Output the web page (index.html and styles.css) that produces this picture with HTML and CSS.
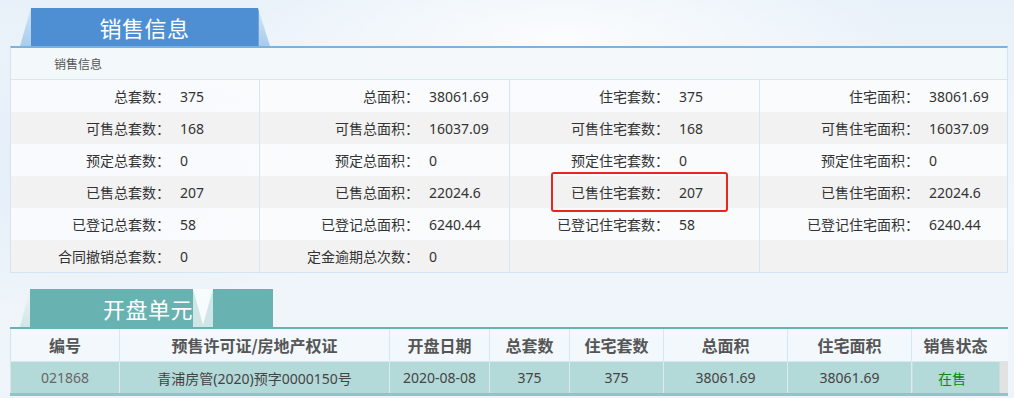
FILE: index.html
```html
<!DOCTYPE html>
<html lang="zh-CN">
<head>
<meta charset="utf-8">
<title>销售信息</title>
<link rel="stylesheet" href="styles.css">
</head>
<body>
<div class="page">
  <div class="tab-row">
    <span class="wing wing-l"></span>
    <span class="tab">销售信息</span>
    <span class="wing wing-r"></span>
  </div>
  <div class="panel">
    <div class="panel-head">销售信息</div>
    <div class="srow">
      <div class="cell"><span class="k">总套数：</span><span class="v">375</span></div>
      <div class="cell"><span class="k">总面积：</span><span class="v">38061.69</span></div>
      <div class="cell"><span class="k">住宅套数：</span><span class="v">375</span></div>
      <div class="cell last"><span class="k">住宅面积：</span><span class="v">38061.69</span></div>
    </div>
    <div class="srow">
      <div class="cell"><span class="k">可售总套数：</span><span class="v">168</span></div>
      <div class="cell"><span class="k">可售总面积：</span><span class="v">16037.09</span></div>
      <div class="cell"><span class="k">可售住宅套数：</span><span class="v">168</span></div>
      <div class="cell last"><span class="k">可售住宅面积：</span><span class="v">16037.09</span></div>
    </div>
    <div class="srow">
      <div class="cell"><span class="k">预定总套数：</span><span class="v">0</span></div>
      <div class="cell"><span class="k">预定总面积：</span><span class="v">0</span></div>
      <div class="cell"><span class="k">预定住宅套数：</span><span class="v">0</span></div>
      <div class="cell last"><span class="k">预定住宅面积：</span><span class="v">0</span></div>
    </div>
    <div class="srow">
      <div class="cell"><span class="k">已售总套数：</span><span class="v">207</span></div>
      <div class="cell"><span class="k">已售总面积：</span><span class="v">22024.6</span></div>
      <div class="cell"><span class="k">已售住宅套数：</span><span class="v">207</span></div>
      <div class="cell last"><span class="k">已售住宅面积：</span><span class="v">22024.6</span></div>
    </div>
    <div class="srow">
      <div class="cell"><span class="k">已登记总套数：</span><span class="v">58</span></div>
      <div class="cell"><span class="k">已登记总面积：</span><span class="v">6240.44</span></div>
      <div class="cell"><span class="k">已登记住宅套数：</span><span class="v">58</span></div>
      <div class="cell last"><span class="k">已登记住宅面积：</span><span class="v">6240.44</span></div>
    </div>
    <div class="srow">
      <div class="cell"><span class="k">合同撤销总套数：</span><span class="v">0</span></div>
      <div class="cell"><span class="k">定金逾期总次数：</span><span class="v">0</span></div>
      <div class="cell"></div>
      <div class="cell last"></div>
    </div>
  </div>

  <div class="tab-row tab-row2">
    <span class="wing wing-l2"></span>
    <span class="tab2">开盘单元</span>
    <span class="notch"></span>
    <span class="tab2-end"></span>
  </div>
  <table class="units">
    <thead>
      <tr>
        <th class="c1">编号</th>
        <th class="c2">预售许可证/房地产权证</th>
        <th class="c3">开盘日期</th>
        <th class="c4">总套数</th>
        <th class="c5">住宅套数</th>
        <th class="c6">总面积</th>
        <th class="c7">住宅面积</th>
        <th class="c8">销售状态</th>
      </tr>
    </thead>
    <tbody>
      <tr>
        <td class="id">021868</td>
        <td>青浦房管(2020)预字0000150号</td>
        <td>2020-08-08</td>
        <td>375</td>
        <td>375</td>
        <td>38061.69</td>
        <td>38061.69</td>
        <td class="status"><span class="on-sale">在售</span></td>
      </tr>
    </tbody>
  </table>

  <div class="mark"></div>
</div>
</body>
</html>
```

FILE: styles.css
```css
html, body {
  margin: 0;
  padding: 0;
}
body {
  width: 1014px;
  height: 398px;
  overflow: hidden;
  font-family: "Noto Sans", "Noto Sans CJK SC", sans-serif;
  color: #333;
  background:
    radial-gradient(ellipse 420px 200px at 80px 180px, rgba(214, 230, 244, 0.55), rgba(214, 230, 244, 0) 70%),
    radial-gradient(ellipse 500px 160px at 560px 40px, rgba(255, 255, 255, 0.8), rgba(255, 255, 255, 0) 70%),
    linear-gradient(180deg, #e8f1f9 0%, #f1f6fb 50%, #eef4f9 100%);
}
.page {
  position: relative;
  padding: 8px 6px 0 10px;
}

/* tabs */
.tab-row {
  display: flex;
  height: 38px;
  margin-left: 10px;
}
.wing {
  display: block;
  height: 38px;
}
.wing-l {
  width: 11px;
  background: linear-gradient(180deg, #cfe4f5, #a9cdee);
  clip-path: polygon(100% 0, 100% 100%, 0 100%);
}
.wing-r {
  width: 12px;
  background: linear-gradient(180deg, #d6e8f6, #a8cbec);
  clip-path: polygon(0 0, 100% 100%, 0 100%);
  box-shadow: inset 1px 0 0 #6fa5d9;
}
.tab {
  width: 227px;
  background: #4e8fd3;
  color: #fff;
  font-family: "Noto Sans CJK SC", sans-serif;
  font-size: 22px;
  line-height: 38px;
  text-align: center;
  letter-spacing: 0.5px;
}

/* sales panel */
.panel {
  border-top: 2px solid #7db2df;
  border-left: 1px solid #d3e4f3;
  border-right: 1px solid #d3e4f3;
  border-bottom: 1px solid #d3e4f3;
  background: rgba(247, 250, 253, 0.8);
}
.panel-head {
  height: 31px;
  line-height: 31px;
  padding-left: 43px;
  font-family: "Noto Sans CJK SC", sans-serif;
  font-size: 12px;
  color: #555;
  background: rgba(243, 247, 251, 0.9);
  border-bottom: 1px solid #d6e6f4;
}
.srow {
  display: flex;
  height: 32px;
  background: rgba(249, 251, 253, 0.75);
}
.srow:nth-child(odd) {
  background: #f2f2f2;
}
.cell {
  box-sizing: border-box;
  width: 250px;
  display: flex;
  align-items: center;
  border-right: 1px solid #d6e6f4;
  font-size: 14px;
}
.cell:first-child {
  width: 249px;
}
.cell.last {
  width: 247px;
  border-right: none;
}
.k {
  width: 159px;
  flex: none;
  text-align: right;
  font-family: "Noto Sans CJK SC", sans-serif;
  color: #333;
}
.v {
  padding-left: 10px;
  color: #333;
}

/* second tab */
.tab-row2 {
  margin-top: 16px;
}
.wing-l2 {
  width: 10px;
  background: linear-gradient(180deg, #eef6f6, #cfe6e6);
  clip-path: polygon(100% 0, 100% 100%, 0 100%);
}
.tab2 {
  width: 163px;
  box-sizing: border-box;
  padding-left: 73px;
  background: #69b2b2;
  color: #fff;
  font-family: "Noto Sans CJK SC", sans-serif;
  font-size: 22px;
  line-height: 38px;
  white-space: nowrap;
  letter-spacing: 0.5px;
}
.notch {
  width: 20px;
  height: 38px;
  background: #cfe6e6;
  position: relative;
}
.notch::before {
  content: "";
  position: absolute;
  inset: 0;
  background: #f6fbfb;
  clip-path: polygon(0 0, 100% 0, 50% 95%);
}
.tab2-end {
  width: 60px;
  height: 38px;
  background: #69b2b2;
}

/* units table */
.units {
  width: 998px;
  table-layout: fixed;
  border-collapse: collapse;
  border-top: 2px solid #69b2b2;
  border-left: 1px solid #d3e6ee;
  font-size: 14px;
}
.units th {
  height: 32px;
  padding: 0;
  background: #f3f8fc;
  font-family: "Noto Sans CJK SC", sans-serif;
  font-weight: bold;
  font-size: 16px;
  color: #555;
  border-right: 1px solid #d6e7f3;
  border-bottom: 1px solid #d6e7f3;
  text-align: center;
}
.units th:last-child {
  border-right: none;
}
.units .c1 { width: 108px; }
.units .c2 { width: 269px; }
.units .c3 { width: 99px; }
.units .c4 { width: 79px; }
.units .c5 { width: 93px; }
.units .c6 { width: 123px; }
.units .c7 { width: 123px; }
.units .c8 { padding-right: 9px; }
.units td {
  height: 31px;
  padding: 0;
  background: #b4d9d9;
  color: #444;
  text-align: center;
  border-right: 1px solid #d8eded;
  border-bottom: 3px solid #8cc6c6;
}
.units td.id {
  color: #666;
}
.units td.status {
  border-right: none;
  background: linear-gradient(90deg, #b4d9d9 0, #b4d9d9 87px, #e2e2e2 87px);
  text-align: left;
  padding-left: 26px;
}
.on-sale {
  color: #0b8a0b;
  font-family: "Noto Sans CJK SC", sans-serif;
}

/* annotation */
.mark {
  position: absolute;
  left: 551px;
  top: 172px;
  width: 177px;
  height: 40px;
  box-sizing: border-box;
  border: 2px solid #e8251e;
  border-radius: 3px;
}
```
